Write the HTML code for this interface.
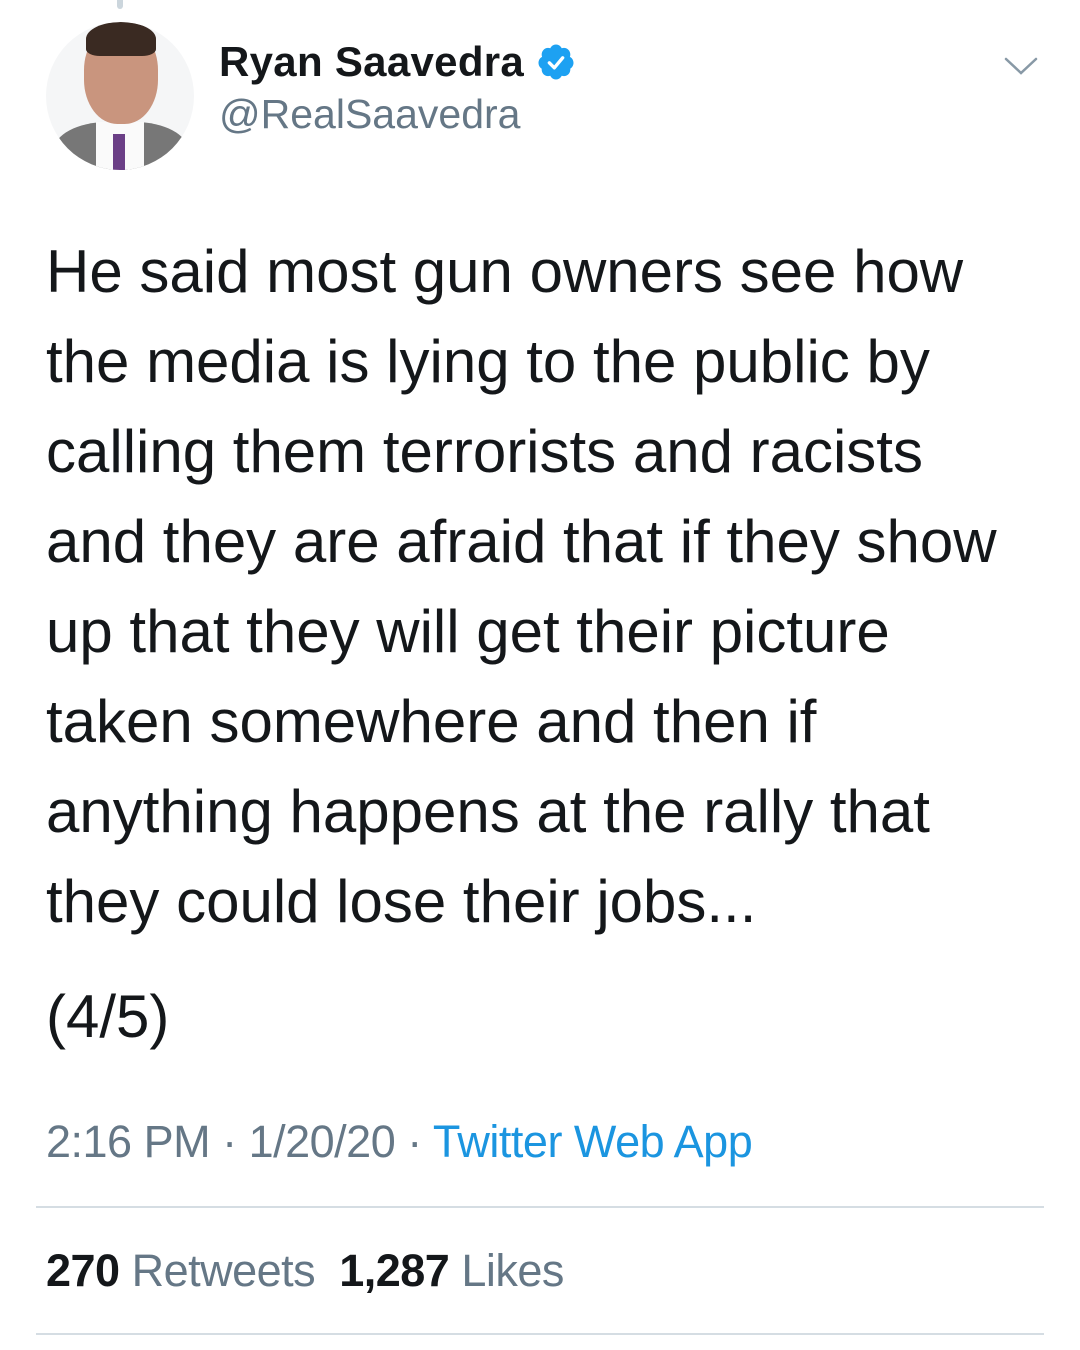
<!DOCTYPE html>
<html><head><meta charset="utf-8"><style>
html,body{margin:0;padding:0;background:#fff;}
body{width:1080px;height:1350px;position:relative;overflow:hidden;font-family:"Liberation Sans",Arial,sans-serif;}
.a{position:absolute;white-space:nowrap;}
.t{font-size:60px;line-height:69px;color:#14171a;left:46px;}
</style></head><body>
<div class="a" style="left:117px;top:0;width:6px;height:9px;background:#ccd6dd;border-radius:0 0 3px 3px"></div>
<div class="a" style="left:46px;top:22px;width:148px;height:148px;border-radius:50%;background:#f5f6f7;overflow:hidden">
  <div class="a" style="left:8px;top:100px;width:134px;height:70px;background:#777;border-radius:40% 40% 0 0"></div>
  <div class="a" style="left:50px;top:100px;width:48px;height:60px;background:#fafafa"></div>
  <div class="a" style="left:67px;top:112px;width:12px;height:40px;background:#6b3f86"></div>
  <div class="a" style="left:38px;top:4px;width:74px;height:98px;background:#c9957e;border-radius:45%"></div>
  <div class="a" style="left:40px;top:0px;width:70px;height:34px;background:#3a2a22;border-radius:50% 50% 20% 20%"></div>
</div>
<div class="a" style="left:219px;top:38px;font-size:42px;font-weight:bold;color:#14171a;letter-spacing:0.3px">Ryan Saavedra</div>
<svg class="a" style="left:536px;top:42px" width="40" height="40" viewBox="0 0 24 24"><path fill="#1da1f2" d="M22.5 12.5c0-1.58-.875-2.95-2.148-3.6.154-.435.238-.905.238-1.4 0-2.210-1.710-3.998-3.818-3.998-.47 0-.92.084-1.336.25C14.818 2.415 13.51 1.5 12 1.5s-2.816.917-3.437 2.250c-.415-.165-.866-.25-1.336-.25-2.110 0-3.818 1.790-3.818 4 0 .494.083.964.237 1.400-1.272.650-2.147 2.018-2.147 3.600 0 1.495.782 2.798 1.942 3.486-.020.170-.032.340-.032.514 0 2.210 1.708 4 3.818 4 .470 0 .920-.086 1.335-.250.620 1.334 1.926 2.250 3.437 2.250 1.512 0 2.818-.916 3.437-2.250.415.163.865.248 1.336.248 2.110 0 3.818-1.790 3.818-4 0-.174-.012-.344-.033-.513 1.158-.687 1.943-1.990 1.943-3.484z"/><path fill="none" stroke="#fff" stroke-width="2" stroke-linecap="round" stroke-linejoin="round" d="M8 12.5l3 3 5-6"/></svg>
<div class="a" style="left:219px;top:91px;font-size:41px;color:#657786">@RealSaavedra</div>
<svg class="a" style="left:1004px;top:56px" width="34" height="20" viewBox="0 0 34 20"><path d="M2 3l15 14 15-14" fill="none" stroke="#8899a6" stroke-width="2.5" stroke-linecap="round"/></svg>
<div class="a t" style="top:237px">He said most gun owners see how</div>
<div class="a t" style="top:327px">the media is lying to the public by</div>
<div class="a t" style="top:417px">calling them terrorists and racists</div>
<div class="a t" style="top:507px">and they are afraid that if they show</div>
<div class="a t" style="top:597px">up that they will get their picture</div>
<div class="a t" style="top:687px">taken somewhere and then if</div>
<div class="a t" style="top:777px">anything happens at the rally that</div>
<div class="a t" style="top:867px">they could lose their jobs...</div>
<div class="a t" style="top:982px">(4/5)</div>
<div class="a" style="left:46px;top:1116px;font-size:45px;color:#657786;letter-spacing:-0.5px">2:16 PM · 1/20/20 · <span style="color:#1b95e0">Twitter Web App</span></div>
<div class="a" style="left:36px;top:1206px;width:1008px;height:2px;background:#d5dde3"></div>
<div class="a" style="left:46px;top:1245px;font-size:45px;color:#657786;letter-spacing:-0.5px"><b style="color:#14171a">270</b> Retweets &nbsp;<b style="color:#14171a">1,287</b> Likes</div>
<div class="a" style="left:36px;top:1333px;width:1008px;height:2px;background:#d5dde3"></div>
</body></html>
